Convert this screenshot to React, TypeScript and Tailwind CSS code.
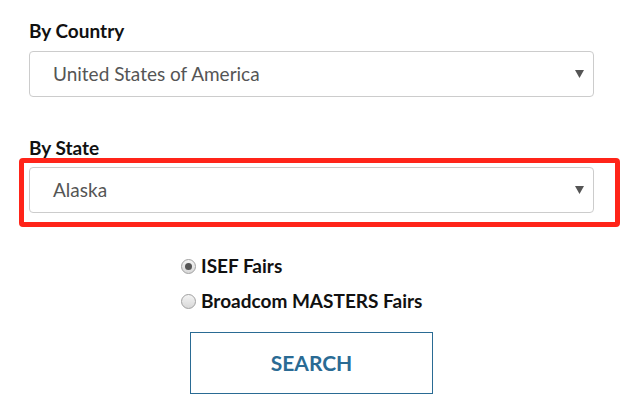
import React from 'react';

const Caret = () => (
  <svg width="9" height="8" viewBox="0 0 9 8" className="absolute right-[9px] top-1/2 -translate-y-1/2">
    <path d="M0 0 H9 L4.5 8 Z" fill="#555" />
  </svg>
);

const Select = ({ value }: { value: string }) => (
  <div className="relative flex h-[46px] w-[565px] items-center rounded-[4px] border border-[#ccc] bg-white pl-[23px] text-[19px] text-[#555]">
    {value}
    <Caret />
  </div>
);

const Radio = ({ checked, label }: { checked?: boolean; label: string }) => (
  <label className="flex items-center gap-[5px]">
    <span className="flex h-[15px] w-[15px] items-center justify-center rounded-full border border-[#a0a0a0] bg-gradient-to-b from-[#f4f4f4] to-[#d8d8d8]">
      {checked && <span className="h-[7px] w-[7px] rounded-full bg-[#555]" />}
    </span>
    <span className="text-[19px] font-bold leading-[24px] text-[#111]">{label}</span>
  </label>
);

export default function App() {
  return (
    <div
      className="h-[409px] w-[642px] bg-white pl-[29px] pt-[19px]"
      style={{ fontFamily: "Lato, 'Liberation Sans', sans-serif" }}
    >
      <div className="text-[19px] font-bold leading-[23px] text-[#111]">By Country</div>
      <div className="mt-[9px]">
        <Select value="United States of America" />
      </div>

      <div className="mt-[39px] text-[19px] font-bold leading-[23px] text-[#111]">By State</div>
      <div className="relative mt-[8px]">
        <Select value="Alaska" />
        {/* highlight annotation */}
        <div className="pointer-events-none absolute -left-[10px] -top-[9px] h-[69px] w-[601px] rounded-[4px] border-[5px] border-[#ff2419]" />
      </div>

      <div className="ml-[152px] mt-[41px] flex flex-col gap-[11px]">
        <Radio checked label="ISEF Fairs" />
        <Radio label="Broadcom MASTERS Fairs" />
      </div>

      <button className="ml-[161px] mt-[19px] flex h-[62px] w-[243px] items-center justify-center border border-[#2a6b94] bg-white text-[21px] font-bold text-[#2a6b94]">
        SEARCH
      </button>
    </div>
  );
}
